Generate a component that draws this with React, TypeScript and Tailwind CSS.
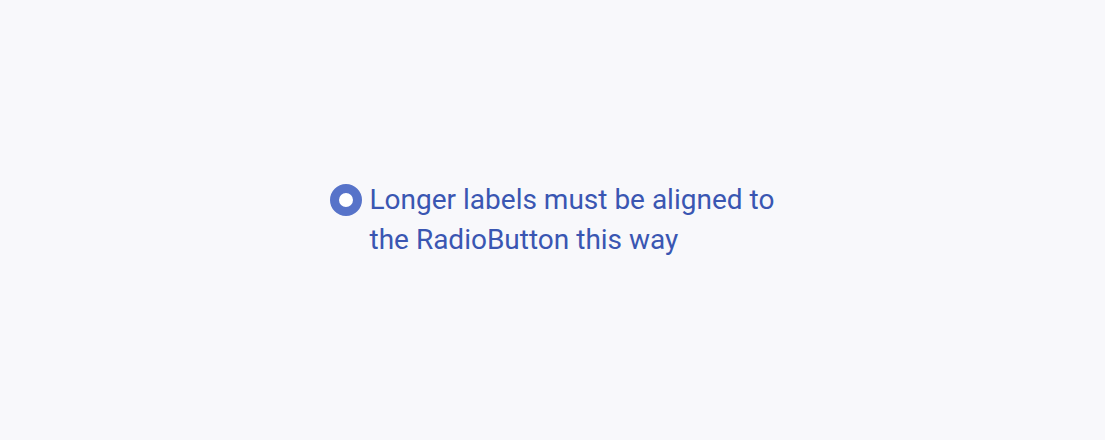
export default function App() {
  return (
    <div className="flex h-[440px] w-full items-center justify-center bg-[#f8f8fb] font-['Roboto',sans-serif]">
      <label className="flex items-start gap-2">
        <span className="mt-1 h-8 w-8 shrink-0 rounded-full border-[9px] border-[#5773c9] bg-white" />
        <span className="max-w-[406px] text-[28px] leading-[40px] text-[#3a56b2]">
          Longer labels must be aligned to the RadioButton this way
        </span>
      </label>
    </div>
  )
}
